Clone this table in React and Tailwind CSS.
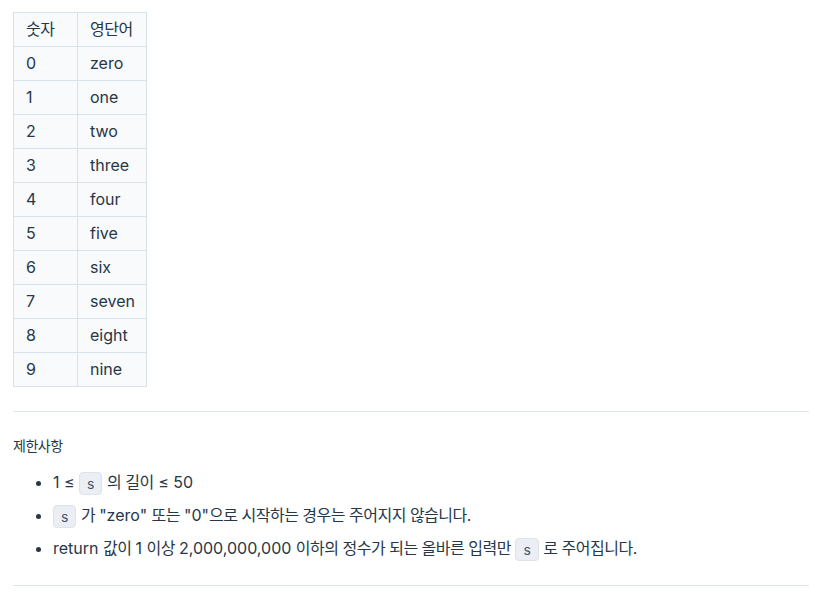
const rows = [
  ['0', 'zero'],
  ['1', 'one'],
  ['2', 'two'],
  ['3', 'three'],
  ['4', 'four'],
  ['5', 'five'],
  ['6', 'six'],
  ['7', 'seven'],
  ['8', 'eight'],
  ['9', 'nine'],
]

// hangul runs get a touch of negative tracking so they sit as tight as the original
const T = ({ children }) =>
  String(children)
    .split(/([\uAC00-\uD7A3][\uAC00-\uD7A3 ]*)/)
    .map((part, i) =>
      /[\uAC00-\uD7A3]/.test(part) ? (
        <span key={i} className="tracking-[-0.5px]">
          {part}
        </span>
      ) : (
        part
      )
    )

const Code = ({ children }) => (
  <code
    className="inline-block h-[23px] rounded-[4px] border border-[#dde3ea] bg-[#ebeef4] px-[7px] align-middle text-[14px] leading-[21px] text-[#44576c]"
    style={{ fontFamily: 'Inter, "Noto Sans CJK KR", sans-serif' }}
  >
    {children}
  </code>
)

export default function App() {
  return (
    <div
      className="bg-white pl-[13px] pr-[8px] pt-[12px] text-[#263747]"
      style={{ fontFamily: 'Inter, "Noto Sans CJK KR", sans-serif' }}
    >
      <table className="border-collapse text-[16px] leading-[33px]">
        <thead>
          <tr>
            <th className="w-[64px] border border-[#d7e2eb] bg-[#f9fafc] pl-[12px] text-left font-normal">
              <T>숫자</T>
            </th>
            <th className="w-[69px] border border-[#d7e2eb] bg-[#f9fafc] pl-[12px] text-left font-normal">
              <T>영단어</T>
            </th>
          </tr>
        </thead>
        <tbody>
          {rows.map(([n, w]) => (
            <tr key={n}>
              <td className="border border-[#d7e2eb] bg-[#f9fafc] pl-[12px]">{n}</td>
              <td className="border border-[#d7e2eb] bg-[#f9fafc] pl-[12px]">{w}</td>
            </tr>
          ))}
        </tbody>
      </table>

      <hr className="mt-[24px] border-t border-[#dfe5ec]" />

      <h5 className="mt-[24px] text-[14px] leading-[20px]">
        <T>제한사항</T>
      </h5>

      <ul className="mt-[10px] list-disc pl-[40px] text-[16px] leading-[33px]">
        <li>
          1 ≤ <Code>s</Code> <T>의 길이</T> ≤ 50
        </li>
        <li>
          <Code>s</Code>
          <T>{' 가 "zero" 또는 "0"으로 시작하는 경우는 주어지지 않습니다.'}</T>
        </li>
        <li>
          <T>return 값이 1 이상 2,000,000,000 이하의 정수가 되는 올바른 입력만</T> <Code>s</Code>{' '}
          <T>로 주어집니다.</T>
        </li>
      </ul>

      <hr className="mt-[20px] border-t border-[#dfe5ec]" />
    </div>
  )
}
